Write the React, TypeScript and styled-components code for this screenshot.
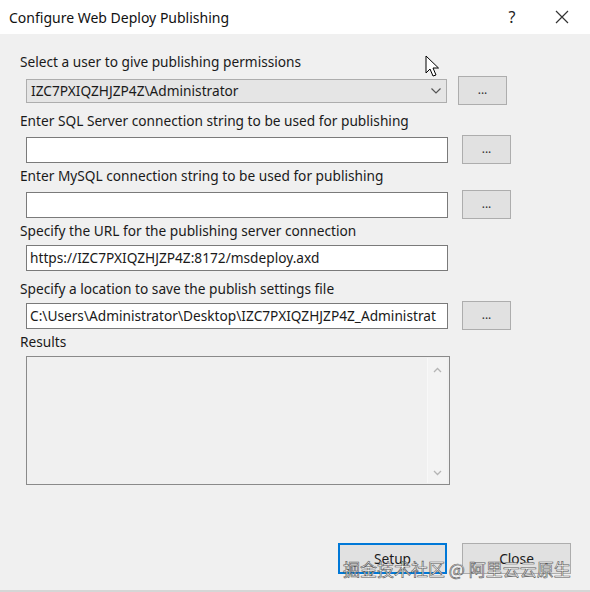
import styled, { createGlobalStyle } from "styled-components";

const GlobalStyle = createGlobalStyle`
  html, body {
    margin: 0;
    padding: 0;
    background: #f0f0f0;
  }
  body {
    font-family: "Segoe UI", "Noto Sans", "Open Sans", sans-serif;
    color: #1a1a1a;
  }
`;

const Window = styled.div`
  position: relative;
  width: 590px;
  height: 592px;
  background: #f0f0f0;
  overflow: hidden;
  display: flex;
  flex-direction: column;
  border-bottom: 2px solid #d6d6d6;
  box-sizing: border-box;
`;

const TitleBar = styled.div`
  height: 34px;
  background: #ffffff;
  display: flex;
  align-items: center;
  padding-left: 9px;
  flex-shrink: 0;
`;

const Title = styled.div`
  font-size: 14px;
  color: #111;
  flex: 1;
`;

const TitleButton = styled.div<{ $w: number }>`
  width: ${(p) => p.$w}px;
  height: 34px;
  display: flex;
  align-items: center;
  justify-content: center;
  font-size: 16px;
  color: #222;
`;

const Body = styled.div`
  flex: 1;
  display: flex;
  flex-direction: column;
  padding: 19px 0 0 20px;
`;

const Label = styled.div<{ $mt?: number }>`
  margin-top: ${(p) => p.$mt ?? 0}px;
  font-size: 13.7px;
  line-height: 18px;
  height: 18px;
  color: #1a1a1a;
`;

const Row = styled.div<{ $gap: number; $mt: number }>`
  display: flex;
  align-items: center;
  gap: ${(p) => p.$gap}px;
  margin-top: ${(p) => p.$mt}px;
  margin-left: 6px;
`;

const Combo = styled.div`
  width: 421px;
  height: 24px;
  box-sizing: border-box;
  background: #e5e5e5;
  border: 1px solid #adadad;
  display: flex;
  align-items: center;
  padding-left: 4px;
  font-size: 13.7px;
`;

const ComboText = styled.span`
  flex: 1;
`;

const Chevron = styled.svg`
  width: 12px;
  height: 8px;
  margin-right: 4px;
`;

const TextBox = styled.div<{ $w: number }>`
  width: ${(p) => p.$w}px;
  height: 26px;
  box-sizing: border-box;
  background: #ffffff;
  border: 1px solid #7a7a7a;
  font-size: 13.7px;
  line-height: 24px;
  padding-left: 3px;
  white-space: nowrap;
  overflow: hidden;
  text-overflow: clip;
`;

const Dots = styled.div`
  width: 49px;
  height: 29px;
  box-sizing: border-box;
  background: #e1e1e1;
  border: 1px solid #adadad;
  display: flex;
  align-items: center;
  justify-content: center;
  font-size: 12px;
  color: #333;
  padding-bottom: 2px;
`;

const Results = styled.div`
  margin: 5px 0 0 6px;
  width: 424px;
  height: 129px;
  box-sizing: border-box;
  border: 1px solid #8a8a8a;
  background: #f0f0f0;
  display: flex;
  justify-content: flex-end;
`;

const ScrollBar = styled.div`
  width: 19px;
  margin: 1px 2px 1px 0;
  background: #f3f3f3;
  border-left: 1px solid #f8f8f8;
  display: flex;
  flex-direction: column;
  justify-content: space-between;
  align-items: center;
  padding: 9px 0 7px;
`;

const Footer = styled.div`
  margin-top: auto;
  margin-bottom: 16px;
  display: flex;
  justify-content: flex-end;
  gap: 15px;
  padding-right: 19px;
`;

const DialogButton = styled.div<{ $default?: boolean }>`
  width: 109px;
  height: 31px;
  box-sizing: border-box;
  background: #e1e1e1;
  border: ${(p) => (p.$default ? "2px solid #0078d7" : "1px solid #adadad")};
  display: flex;
  align-items: center;
  justify-content: center;
  font-size: 13.7px;
  color: #1a1a1a;
`;

const Watermark = styled.div`
  position: absolute;
  left: 343px;
  top: 556px;
  font-family: "Noto Sans CJK SC", sans-serif;
  font-size: 17px;
  color: #ffffff;
  -webkit-text-stroke: 0.6px #555;
  white-space: nowrap;
`;

const Cursor = styled.svg`
  position: absolute;
  left: 425px;
  top: 55px;
  width: 16px;
  height: 24px;
`;

function Arrow({ up }: { up?: boolean }) {
  return (
    <svg width="9" height="6" viewBox="0 0 9 6">
      <path
        d={up ? "M1 5 L4.5 1.5 L8 5" : "M1 1 L4.5 4.5 L8 1"}
        fill="none"
        stroke="#b5b5b5"
        strokeWidth="1.3"
      />
    </svg>
  );
}

export default function App() {
  return (
    <Window>
      <GlobalStyle />
      <TitleBar>
        <Title>Configure Web Deploy Publishing</Title>
        <TitleButton $w={44}>?</TitleButton>
        <TitleButton $w={56}>
          <svg width="14" height="14" viewBox="0 0 14 14">
            <path d="M1 1 L13 13 M13 1 L1 13" stroke="#333" strokeWidth="1.2" />
          </svg>
        </TitleButton>
      </TitleBar>
      <Body>
        <Label>Select a user to give publishing permissions</Label>
        <Row $gap={11} $mt={5}>
          <Combo>
            <ComboText>IZC7PXIQZHJZP4Z\Administrator</ComboText>
            <Chevron viewBox="0 0 12 8">
              <path d="M1.5 1.5 L6 6 L10.5 1.5" fill="none" stroke="#555" strokeWidth="1.2" />
            </Chevron>
          </Combo>
          <Dots>...</Dots>
        </Row>
        <Label $mt={7}>Enter SQL Server connection string to be used for publishing</Label>
        <Row $gap={14} $mt={5}>
          <TextBox $w={422} />
          <Dots>...</Dots>
        </Row>
        <Label $mt={3}>Enter MySQL connection string to be used for publishing</Label>
        <Row $gap={14} $mt={5}>
          <TextBox $w={422} />
          <Dots>...</Dots>
        </Row>
        <Label $mt={3}>Specify the URL for the publishing server connection</Label>
        <Row $gap={14} $mt={5}>
          <TextBox $w={422}>https://IZC7PXIQZHJZP4Z:8172/msdeploy.axd</TextBox>
        </Row>
        <Label $mt={9}>Specify a location to save the publish settings file</Label>
        <Row $gap={14} $mt={3}>
          <TextBox $w={422}>C:\Users\Administrator\Desktop\IZC7PXIQZHJZP4Z_Administrat</TextBox>
          <Dots>...</Dots>
        </Row>
        <Label $mt={3}>Results</Label>
        <Results>
          <ScrollBar>
            <Arrow up />
            <Arrow />
          </ScrollBar>
        </Results>
        <Footer>
          <DialogButton $default>Setup</DialogButton>
          <DialogButton>Close</DialogButton>
        </Footer>
      </Body>
      <Cursor viewBox="0 0 16 24">
        <path
          d="M1 1 L1 18 L5 14 L8 21 L11 20 L8 13 L13.5 13 Z"
          fill="#ffffff"
          stroke="#000"
          strokeWidth="1"
          strokeLinejoin="round"
        />
      </Cursor>
      <Watermark>掘金技术社区 @ 阿里云云原生</Watermark>
    </Window>
  );
}
